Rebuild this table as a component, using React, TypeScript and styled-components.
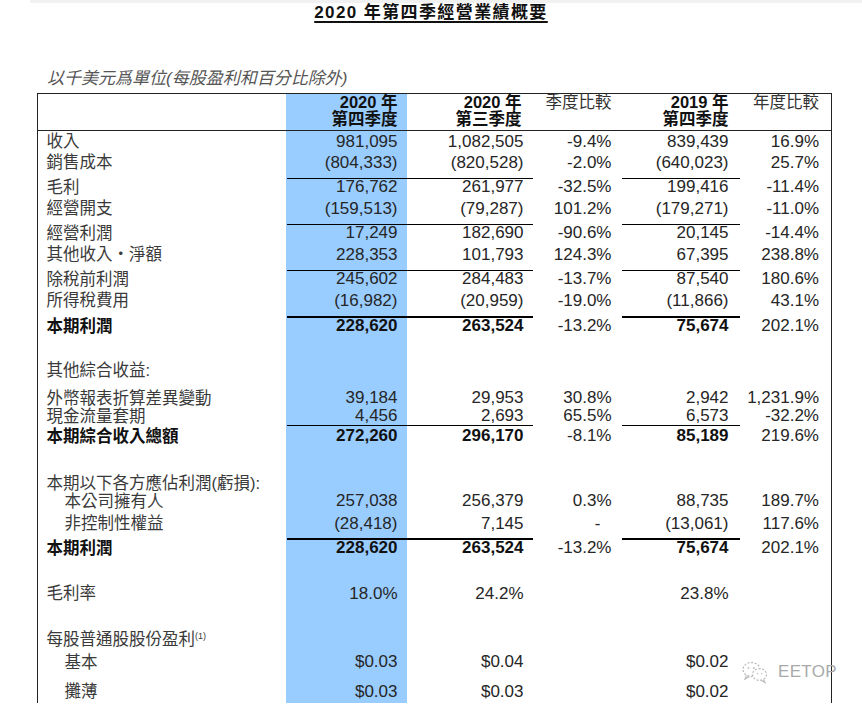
import React from "react";
import styled, { createGlobalStyle } from "styled-components";

const GlobalStyle = createGlobalStyle`
  html, body {
    margin: 0;
    padding: 0;
    background: #ffffff;
  }
  body {
    font-family: "Liberation Sans", "Noto Sans CJK TC", Arial, sans-serif;
    color: #333;
  }
`;

// column widths inside the table frame
const COLS = "248.5px 121px 125px 89px 118px 1fr";
const BLUE = "#99ccff";

const Page = styled.div`
  position: relative;
  width: 862px;
  height: 723px;
  overflow: hidden;
  background: #fff;
`;

const TopStrip = styled.div`
  height: 3px;
  margin-left: 30px;
  background: #f1f1f1;
`;

const Title = styled.h1`
  margin: 0;
  text-align: center;
  font-size: 17px;
  line-height: 19px;
  font-weight: 700;
  letter-spacing: 1.4px;
  color: #111;
  text-decoration: underline;
  text-decoration-thickness: 1.5px;
  text-underline-offset: 3px;
`;

const Subtitle = styled.div`
  margin-top: 47px;
  padding-left: 47px;
  font-size: 17px;
  line-height: 20px;
  font-style: italic;
  color: #555;
`;

const Table = styled.div`
  box-sizing: border-box;
  width: 795px;
  margin: 3.5px 0 0 37px;
  border: 1.5px solid #222;
  border-bottom: none;
  height: 610px;
  background: linear-gradient(
    to right,
    transparent 248.5px,
    ${BLUE} 248.5px,
    ${BLUE} 369.5px,
    transparent 369.5px
  );
`;

const HeaderRow = styled.div`
  display: grid;
  grid-template-columns: ${COLS};
  height: 36px;
  border-bottom: 1.5px solid #222;
`;

const HeadCell = styled.div<{ $pr: number; $bold?: boolean }>`
  text-align: right;
  padding-right: ${(p) => p.$pr}px;
  font-size: 16.5px;
  line-height: 17px;
  font-weight: ${(p) => (p.$bold ? 700 : 400)};
  color: ${(p) => (p.$bold ? "#111" : "#333")};
  white-space: nowrap;
`;

const Row = styled.div<{ $gap: number }>`
  display: grid;
  grid-template-columns: ${COLS};
  margin-top: ${(p) => p.$gap}px;
`;

const Cell = styled.div<{
  $lh: number;
  $pb: number;
  $rule: number;
  $ruled?: boolean;
  $pr: number;
  $bold?: boolean;
}>`
  text-align: right;
  padding-right: ${(p) => p.$pr}px;
  padding-bottom: ${(p) => p.$pb}px;
  border-top: ${(p) => p.$rule}px solid
    ${(p) => (p.$ruled ? "#000" : "transparent")};
  font-size: 17px;
  line-height: ${(p) => p.$lh}px;
  font-weight: ${(p) => (p.$bold ? 700 : 400)};
  color: ${(p) => (p.$bold ? "#111" : "#262626")};
  white-space: nowrap;
`;

const LabelCell = styled(Cell)<{ $indent?: boolean }>`
  text-align: left;
  padding-right: 0;
  padding-left: ${(p) => (p.$indent ? 26.5 : 8.5)}px;
  font-size: 16.5px;
  color: ${(p) => (p.$bold ? "#111" : "#3a3a3a")};
`;

const Sup = styled.sup`
  font-size: 9px;
  line-height: 0;
  vertical-align: 6px;
`;

const Watermark = styled.div`
  position: absolute;
  left: 741px;
  top: 660px;
  display: flex;
  align-items: center;
  gap: 9px;
  color: #a9a9a9;
  font-size: 17px;
  line-height: 22px;
  letter-spacing: 0.3px;
`;

type Rule = "single" | "double";

interface RowSpec {
  label: string;
  v?: string[];
  rule?: Rule;
  bold?: boolean;
  indent?: boolean;
  sup?: string;
  gap?: number;
  lh?: number;
  pb?: number;
}

const rows: RowSpec[] = [
  { label: "收入", v: ["981,095", "1,082,505", "-9.4%", "839,439", "16.9%"] },
  { label: "銷售成本", v: ["(804,333)", "(820,528)", "-2.0%", "(640,023)", "25.7%"] },
  { label: "毛利", v: ["176,762", "261,977", "-32.5%", "199,416", "-11.4%"], rule: "single" },
  { label: "經營開支", v: ["(159,513)", "(79,287)", "101.2%", "(179,271)", "-11.0%"] },
  { label: "經營利潤", v: ["17,249", "182,690", "-90.6%", "20,145", "-14.4%"], rule: "single" },
  { label: "其他收入・淨額", v: ["228,353", "101,793", "124.3%", "67,395", "238.8%"] },
  { label: "除稅前利潤", v: ["245,602", "284,483", "-13.7%", "87,540", "180.6%"], rule: "single" },
  { label: "所得稅費用", v: ["(16,982)", "(20,959)", "-19.0%", "(11,866)", "43.1%"] },
  { label: "本期利潤", v: ["228,620", "263,524", "-13.2%", "75,674", "202.1%"], rule: "double", bold: true },
  { label: "其他綜合收益:", gap: 23 },
  { label: "外幣報表折算差異變動", v: ["39,184", "29,953", "30.8%", "2,942", "1,231.9%"], gap: 7.5, lh: 18 },
  { label: "現金流量套期", v: ["4,456", "2,693", "65.5%", "6,573", "-32.2%"], lh: 18 },
  { label: "本期綜合收入總額", v: ["272,260", "296,170", "-8.1%", "85,189", "219.6%"], rule: "single", bold: true, gap: 0, lh: 20, pb: 0 },
  { label: "本期以下各方應佔利潤(虧損):", gap: 28.5, lh: 18 },
  { label: "本公司擁有人", v: ["257,038", "256,379", "0.3%", "88,735", "189.7%"], indent: true, lh: 18 },
  { label: "非控制性權益", v: ["(28,418)", "7,145", "-", "(13,061)", "117.6%"], indent: true, gap: 3, lh: 21 },
  { label: "本期利潤", v: ["228,620", "263,524", "-13.2%", "75,674", "202.1%"], rule: "double", bold: true, gap: 3.5 },
  { label: "毛利率", v: ["18.0%", "24.2%", "", "23.8%", ""], gap: 24.5 },
  { label: "每股普通股股份盈利", sup: "(1)", gap: 24 },
  { label: "基本", v: ["$0.03", "$0.04", "", "$0.02", ""], indent: true, lh: 24.5 },
  { label: "攤薄", v: ["$0.03", "$0.03", "", "$0.02", ""], indent: true, gap: 5.5, lh: 23 },
];

// right padding of each value column; which columns carry the rule and bold
const valuePad = [10, 9, 10, 11, 12];
const ruledCols = [true, true, false, true, false];
const boldCols = [true, true, false, true, false];

const WeChatMark = () => (
  <svg width="28" height="24" viewBox="0 0 28 24" fill="none">
    <ellipse cx="10.5" cy="9.5" rx="8.5" ry="7" stroke="#bdbdbd" strokeWidth="1.3" strokeDasharray="2 1.6" />
    <path d="M5.5 15.5 L4 19 L8.5 16.4" stroke="#bdbdbd" strokeWidth="1.2" fill="none" />
    <ellipse cx="18.5" cy="14.5" rx="7" ry="5.8" fill="#fff" stroke="#bdbdbd" strokeWidth="1.3" strokeDasharray="2 1.6" />
    <path d="M22.5 19.4 L24 22.5 L20 20.2" stroke="#bdbdbd" strokeWidth="1.2" fill="none" />
    <circle cx="7.5" cy="8" r="1" fill="#c4c4c4" />
    <circle cx="13" cy="8" r="1" fill="#c4c4c4" />
    <circle cx="16.5" cy="13.5" r="0.8" fill="#c4c4c4" />
    <circle cx="20.8" cy="13.5" r="0.8" fill="#c4c4c4" />
  </svg>
);

const TableRow = ({ spec }: { spec: RowSpec }) => {
  const ruled = !!spec.rule;
  const rule = spec.rule === "double" ? 2 : ruled ? 1 : 0;
  const gap = spec.gap ?? (spec.rule === "double" ? 4 : ruled ? 4.5 : 0);
  const lh = spec.lh ?? (ruled ? 16 : 21.5);
  const pb = spec.pb ?? (ruled ? 3 : 0);
  const values = spec.v ?? ["", "", "", "", ""];

  return (
    <Row $gap={gap}>
      <LabelCell $lh={lh} $pb={pb} $rule={rule} $pr={0} $bold={spec.bold} $indent={spec.indent}>
        {spec.label}
        {spec.sup && <Sup>{spec.sup}</Sup>}
      </LabelCell>
      {values.map((val, i) => (
        <Cell
          key={i}
          $lh={lh}
          $pb={pb}
          $rule={rule}
          $ruled={ruled && ruledCols[i]}
          $pr={val === "-" ? 21 : valuePad[i]}
          $bold={spec.bold && boldCols[i]}
        >
          {val}
        </Cell>
      ))}
    </Row>
  );
};

export default function App() {
  return (
    <>
      <GlobalStyle />
      <Page>
        <TopStrip />
        <Title>2020 年第四季經營業績概要</Title>
        <Subtitle>以千美元爲單位(每股盈利和百分比除外)</Subtitle>
        <Table>
          <HeaderRow>
            <div />
            <HeadCell $pr={10} $bold>
              2020 年<br />第四季度
            </HeadCell>
            <HeadCell $pr={11} $bold>
              2020 年<br />第三季度
            </HeadCell>
            <HeadCell $pr={10}>季度比較</HeadCell>
            <HeadCell $pr={11} $bold>
              2019 年<br />第四季度
            </HeadCell>
            <HeadCell $pr={12}>年度比較</HeadCell>
          </HeaderRow>
          {rows.map((r, i) => (
            <TableRow key={i} spec={r} />
          ))}
        </Table>
        <Watermark>
          <WeChatMark />
          <span>EETOP</span>
        </Watermark>
      </Page>
    </>
  );
}
